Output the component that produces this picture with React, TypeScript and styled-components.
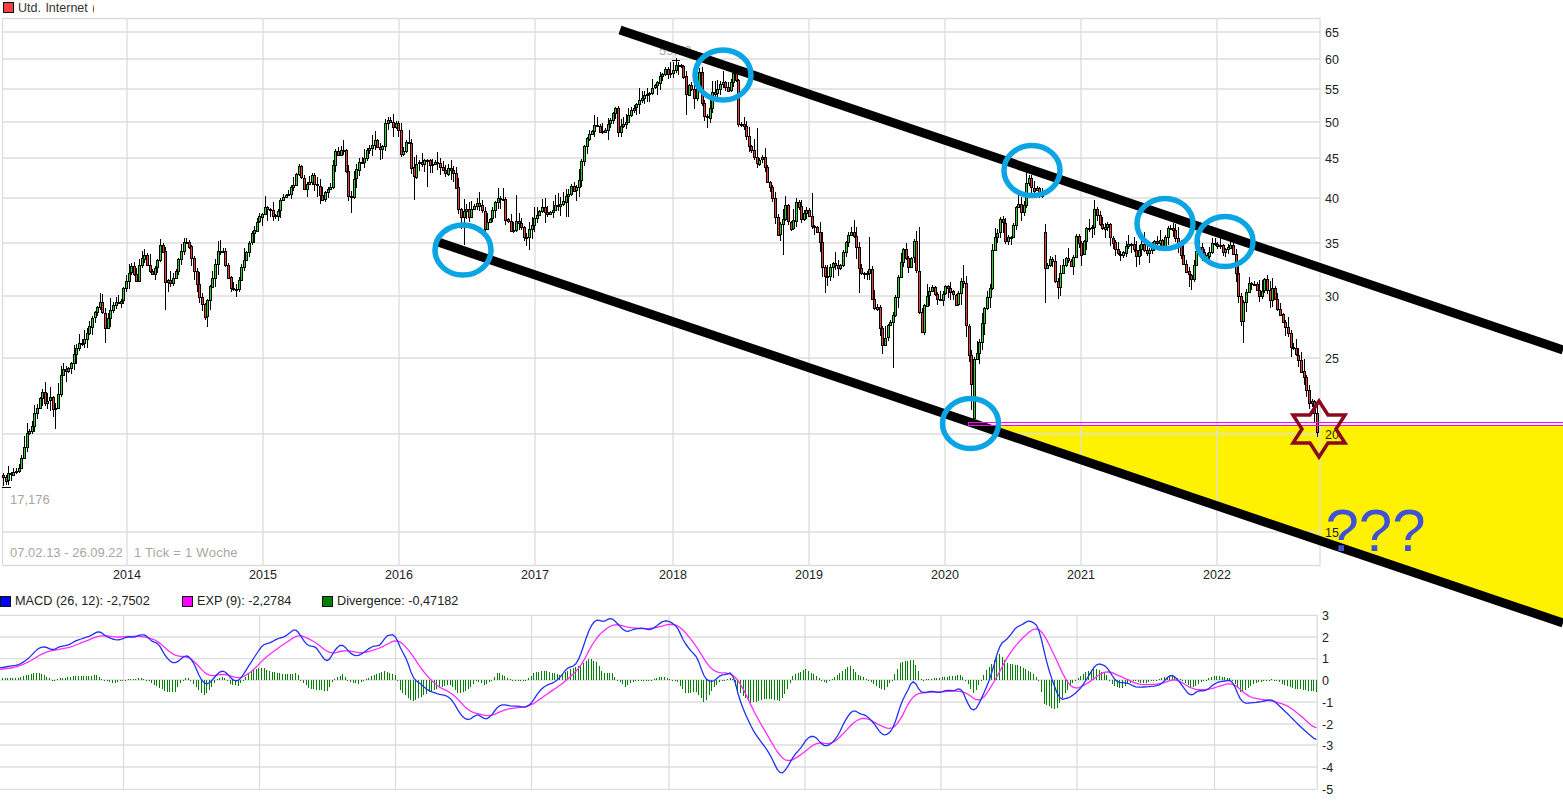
import * as React from "react";
import styled, { createGlobalStyle } from "styled-components";

type Pt = [number, number];

// traced by hand from the chart, all in page pixels
const PRICE: Pt[] = [
  [3, 480], [10, 475], [18, 470], [23, 457], [27, 433], [33, 423], [37, 407], [42, 390], [47, 405], [50, 393],
  [54, 415], [58, 397], [62, 367], [67, 374], [74, 357], [80, 342], [87, 335], [93, 318], [100, 298], [106, 328],
  [110, 308], [121, 300], [126, 282], [132, 268], [137, 283], [140, 260], [145, 255], [152, 277], [158, 262],
  [162, 238], [165, 280], [172, 287], [178, 263], [185, 240], [190, 247], [193, 267], [198, 290], [205, 315],
  [212, 280], [218, 253], [223, 252], [232, 293], [237, 285], [245, 257], [252, 232], [258, 223], [267, 205],
  [274, 220], [282, 198], [293, 187], [300, 167], [304, 190], [312, 175], [322, 197], [330, 190], [335, 153],
  [345, 150], [348, 193], [352, 200], [355, 170], [362, 160], [370, 148], [375, 138], [382, 155], [385, 122],
  [390, 115], [392, 130], [397, 118], [402, 163], [405, 142], [410, 140], [413, 182], [417, 165], [425, 160],
  [432, 167], [437, 160], [445, 173], [453, 167], [457, 190], [458, 207], [462, 218], [466, 208], [470, 215],
  [475, 202], [482, 205], [485, 232], [490, 217], [495, 203], [503, 197], [505, 217], [513, 232], [518, 218],
  [525, 240], [530, 230], [537, 213], [543, 208], [552, 213], [557, 205], [565, 200], [570, 188], [578, 188],
  [583, 153], [587, 137], [597, 125], [602, 133], [610, 120], [617, 107], [618, 132], [627, 120], [632, 108],
  [640, 102], [647, 93], [655, 85], [663, 73], [672, 70], [675, 65], [680, 68], [683, 65], [686, 100], [690, 80],
  [695, 98], [700, 73], [703, 115], [709, 117], [712, 93], [717, 93], [722, 80], [727, 90], [730, 88], [733, 73],
  [737, 83], [738, 128], [743, 123], [747, 138], [752, 150], [757, 165], [763, 155], [767, 178], [772, 190],
  [775, 215], [778, 232], [783, 223], [786, 203], [790, 235], [795, 213], [798, 190], [800, 220], [808, 210],
  [812, 223], [818, 232], [822, 252], [823, 277], [828, 273], [835, 262], [840, 268], [845, 242], [852, 230],
  [857, 247], [860, 273], [870, 270], [873, 305], [878, 308], [883, 347], [887, 327], [893, 315], [900, 268],
  [903, 247], [910, 270], [915, 238], [919, 307], [922, 333], [925, 300], [933, 287], [940, 303], [947, 283],
  [957, 305], [963, 272], [967, 330], [972, 383], [974.4, 360], [980, 340], [985, 305], [990, 290],
  [993, 243], [998, 230], [1002, 218], [1006, 243], [1013, 232], [1017, 198], [1023, 213], [1028, 175], [1033, 193],
  [1037, 190], [1043, 197], [1044.5, 267], [1049, 262], [1053, 260], [1057, 293], [1062, 267], [1068, 258], [1073, 266],
  [1076, 235], [1083, 257], [1085, 230], [1092, 227], [1094, 205], [1098, 217], [1102, 230], [1108, 225], [1112, 243],
  [1117, 253], [1122, 253], [1128, 240], [1137, 258], [1140, 245], [1147, 252], [1157, 240], [1163, 245], [1168, 225],
  [1173, 227], [1177, 242], [1181, 253], [1185, 268], [1192, 278], [1196, 255], [1200, 245], [1205, 263], [1212, 243],
  [1218, 243], [1225, 253], [1232, 242], [1238, 285], [1241, 322], [1243, 307], [1246, 293], [1248, 283], [1253, 283],
  [1260, 295], [1265, 282], [1270, 298], [1273, 285], [1278, 310], [1282, 317], [1287, 328], [1291, 347], [1295, 348],
  [1298, 357], [1304, 376], [1307, 393], [1310, 402], [1313, 400], [1317, 432],
];

// wicks that stick out far enough to be seen one by one
const LONG_WICKS: Pt[] = [
  [56, 429], [105, 343], [165, 310], [352, 213], [414, 200], [428, 187], [464, 245], [516, 195], [529, 250],
  [567, 217], [686, 115], [707, 128], [756, 128], [783, 255], [812, 193], [824, 293], [858, 293], [869, 237],
  [892, 368], [919, 227], [963, 265], [972, 410], [1044, 303], [1243, 343],
];

// weeks that opened far from the last close
const GAPS: Pt[] = [[974, 418], [1045, 232]];

// MACD traces, measured off a zoom that was squeezed: x / 2.376, y / 3
const macdA: Pt[] = [
  [0, 174], [20, 169], [45, 165], [65, 148], [80, 130], [90, 114], [108, 109], [125, 122], [140, 110], [162, 106],
  [180, 92], [200, 84], [218, 76], [235, 61], [250, 78], [275, 91], [290, 88], [305, 78], [315, 84], [335, 73],
  [350, 76], [362, 100], [375, 94], [390, 135], [412, 163], [428, 150], [442, 133], [458, 150], [475, 205], [490, 227],
  [505, 210], [520, 185], [535, 182], [550, 208], [565, 217], [580, 190], [600, 150], [625, 102], [640, 100], [660, 85],
  [675, 82], [703, 54], [720, 90], [735, 112], [748, 105], [768, 145], [780, 160], [795, 118], [815, 100], [825, 122],
  [845, 140], [860, 132], [880, 112], [892, 106], [905, 110], [915, 77], [940, 73], [952, 120], [965, 140], [980, 205],
  [1000, 222], [1015, 240], [1040, 252], [1065, 258], [1080, 280], [1092, 312], [1112, 333], [1130, 315], [1140, 312],
  [1150, 330], [1165, 322], [1185, 285], [1205, 284], [1215, 290], [1232, 287], [1245, 294], [1260, 285], [1280, 245],
  [1297, 225], [1310, 222], [1330, 205], [1345, 175], [1370, 165], [1385, 115], [1400, 55], [1418, 25], [1432, 38],
  [1452, 21], [1470, 45], [1487, 67], [1510, 56], [1530, 54], [1545, 62], [1568, 40],
];
const macdB: Pt[] = [
  [0, 37], [12, 31], [25, 35], [45, 55], [55, 95], [70, 113], [75, 132], [87, 133], [105, 205], [125, 218], [145, 193],
  [162, 195], [172, 178], [180, 230], [195, 290], [220, 360], [240, 395], [260, 430], [285, 495], [300, 480], [318, 435],
  [335, 415], [350, 382], [368, 376], [385, 405], [398, 410], [420, 385], [440, 330], [460, 297], [475, 313], [490, 315],
  [515, 350], [525, 375], [540, 375], [555, 355], [575, 270], [590, 240], [603, 200], [615, 245], [630, 248], [645, 243],
  [665, 249], [680, 240], [705, 243], [715, 228], [730, 280], [745, 307], [755, 290], [785, 205], [807, 103], [825, 88],
  [850, 45], [860, 50], [870, 31], [885, 35], [900, 50], [915, 140], [930, 205], [950, 270], [975, 262], [1000, 235],
  [1037, 160], [1060, 167], [1085, 218], [1110, 218], [1130, 232], [1165, 230], [1190, 225], [1212, 193], [1225, 200],
  [1260, 260], [1280, 240], [1295, 245], [1320, 218], [1345, 212], [1360, 210], [1375, 260], [1385, 280], [1420, 277],
  [1455, 268], [1490, 310], [1530, 360], [1560, 392],
];
const expA: Pt[] = [
  [0, 179], [40, 171], [70, 155], [105, 127], [130, 120], [165, 113], [200, 95], [240, 75], [280, 82], [320, 78],
  [345, 80], [375, 92], [395, 118], [420, 141], [445, 137], [465, 158], [490, 195], [505, 200], [530, 190], [570, 207],
  [600, 183], [630, 143], [660, 115], [710, 72], [750, 97], [785, 133], [820, 120], [860, 130], [900, 116], [945, 86],
  [975, 125], [1005, 185], [1040, 230], [1075, 250], [1115, 305], [1165, 320], [1200, 298], [1260, 288], [1300, 252],
  [1340, 218], [1380, 170], [1410, 95], [1430, 65], [1460, 40], [1490, 52], [1530, 57], [1568, 52],
];
const expB: Pt[] = [
  [0, 48], [25, 42], [45, 45], [85, 105], [110, 160], [130, 187], [170, 190], [190, 215], [225, 310], [255, 375],
  [285, 440], [305, 458], [340, 430], [370, 397], [410, 403], [440, 365], [465, 330], [490, 322], [520, 345], [548, 360],
  [565, 345], [600, 255], [625, 248], [700, 243], [725, 245], [760, 280], [790, 225], [830, 130], [860, 85], [890, 52],
  [905, 55], [935, 130], [965, 215], [985, 240], [1010, 225], [1060, 180], [1090, 197], [1140, 225], [1190, 222],
  [1225, 205], [1265, 238], [1300, 240], [1360, 217], [1400, 262], [1450, 272], [1490, 285], [1530, 325], [1560, 362],
];
const divA: Pt[] = [
  [0, 204], [40, 204], [60, 196], [90, 187], [110, 200], [125, 211], [140, 205], [175, 199], [230, 196], [245, 210],
  [270, 220], [300, 208], [335, 204], [350, 212], [370, 228], [395, 245], [415, 245], [430, 215], [443, 202], [455, 215],
  [482, 257], [500, 235], [515, 205], [530, 200], [545, 222], [565, 228], [580, 205], [600, 178], [625, 172], [640, 185],
  [680, 193], [705, 190], [715, 212], [735, 236], [760, 240], [775, 245], [790, 212], [812, 192], [830, 215], [850, 222],
  [880, 200], [915, 183], [940, 195], [950, 240], [978, 275], [1000, 260], [1020, 245], [1060, 225], [1070, 225],
  [1090, 252], [1115, 235], [1130, 212], [1150, 225], [1170, 208], [1182, 186], [1210, 208], [1245, 215], [1270, 187],
  [1295, 183], [1330, 195], [1350, 180], [1380, 165], [1400, 145], [1420, 160], [1430, 188], [1455, 190], [1465, 210],
  [1485, 230], [1510, 210], [1545, 212], [1568, 198],
];
const divB: Pt[] = [
  [0, 198], [20, 207], [40, 215], [60, 250], [85, 245], [105, 278], [125, 235], [145, 212], [170, 202], [180, 238],
  [215, 280], [250, 265], [285, 273], [300, 245], [315, 195], [345, 178], [370, 197], [395, 220], [415, 200], [450, 165],
  [470, 195], [495, 210], [530, 242], [550, 212], [570, 157], [600, 148], [612, 180], [620, 210], [715, 195], [725, 210],
  [745, 252], [760, 215], [775, 180], [805, 132], [825, 160], [850, 165], [885, 190], [900, 212], [910, 280], [940, 300],
  [960, 250], [985, 212], [1010, 187], [1035, 175], [1060, 195], [1075, 225], [1095, 237], [1125, 210], [1145, 220],
  [1175, 212], [1215, 195], [1235, 208], [1262, 235], [1290, 212], [1320, 197], [1355, 205], [1380, 250], [1410, 220],
  [1450, 208], [1460, 210], [1500, 235], [1560, 245],
];

const WEEK = 2.617;
const trace = (a: Pt[], b: Pt[]): Pt[] =>
  [...a.map(([x, y]): Pt => [x / 2.376, 610 + y / 3]), ...b.map(([x, y]): Pt => [660 + x / 2.376, 610 + y / 3])];

const interp = (pts: Pt[], x: number) => {
  if (x <= pts[0][0]) return pts[0][1];
  for (let i = 1; i < pts.length; i++) {
    if (x <= pts[i][0]) {
      const [x0, y0] = pts[i - 1];
      const [x1, y1] = pts[i];
      return y0 + ((y1 - y0) * (x - x0)) / (x1 - x0 || 1);
    }
  }
  return pts[pts.length - 1][1];
};

const rnd = (n: number) => {
  const s = Math.sin(n * 12.9898) * 43758.5453;
  return s - Math.floor(s);
};

// one point per week, averaged over the weeks around it
const smooth = (pts: Pt[], reach: number): Pt[] => {
  const raw: Pt[] = [];
  for (let x = 0; x <= pts[pts.length - 1][0]; x += WEEK) raw.push([x, interp(pts, x)]);
  return raw.map(([x], i) => {
    const part = raw.slice(Math.max(0, i - reach), i + reach + 1);
    return [x, part.reduce((sum, p) => sum + p[1], 0) / part.length];
  });
};

const toPoints = (pts: Pt[]) => pts.map(([x, y]) => `${x.toFixed(1)},${y.toFixed(1)}`).join(" ");

const candles = Array.from({ length: 503 }, (_, i) => i).reduce<
  { x: number; open: number; close: number; high: number; low: number }[]
>((list, i) => {
  const x = Math.round(3 + WEEK * i);
  const close = interp(PRICE, 3.5 + WEEK * i) + (rnd(i) - 0.5) * 6;
  const gap = GAPS.find(([gx]) => gx === x);
  const open = gap ? gap[1] : list.length ? list[list.length - 1].close : close - 2;
  const top = Math.min(open, close);
  const bottom = Math.max(open, close);
  let high = top - 1 - rnd(i + 900) ** 2 * 11;
  let low = bottom + 1 + rnd(i + 1800) ** 2 * 11;
  LONG_WICKS.forEach(([wx, wy]) => {
    if (Math.abs(wx - x) <= 1.3) {
      if (wy < top) high = wy;
      else low = wy;
    }
  });
  list.push({ x, open, close, high, low });
  return list;
}, []);

const macdLine = smooth(trace(macdA, macdB), 1);
const expLine = smooth(trace(expA, expB), 2);
const divLine = trace(divA, divB);
const bars = Array.from({ length: 503 }, (_, i) => 2 + WEEK * i).map((x) => ({
  x: Math.round(x),
  y: interp(divLine, x),
}));

const YEARS = ["2014", "2015", "2016", "2017", "2018", "2019", "2020", "2021", "2022"];
const PRICE_V = [127, 263, 399, 535, 673, 809, 945, 1081, 1217];
const MACD_V = [123.5, 259.5, 395.5, 531.5, 669, 805, 941, 1077, 1214.5];
const PRICE_H: [number, string][] = [
  [32, "65"], [59, "60"], [89, "55"], [122, "50"], [158, "45"], [198, "40"], [243, "35"], [296, "30"], [358, "25"],
  [434, "20"], [532, "15"],
];
const MACD_H: [number, string][] = [
  [615.3, "3"], [637, "2"], [658.7, "1"], [680, "0"], [702, "-1"], [724, "-2"], [745, "-3"], [767, "-4"], [789.3, "-5"],
];
const RINGS: Pt[] = [[723, 75], [1032, 170.5], [1165, 223.5], [1225, 241.5], [970.5, 423.5], [463, 250]];
const STAR =
  "1319,401 1328,415 1345,415 1336,429 1345,443 1328,443 1319,457 1310,443 1293,443 1302,429 1293,415 1310,415";

const GlobalStyle = createGlobalStyle`
  html, body {
    margin: 0;
    padding: 0;
    background: #fff;
  }
  body {
    font-family: "Liberation Sans", Arial, sans-serif;
  }
`;

const Page = styled.div`
  position: relative;
  width: 1563px;
  height: 804px;
  overflow: hidden;
  background: #fff;
`;

const TitleRow = styled.div`
  display: flex;
  align-items: center;
  gap: 4px;
  height: 18px;
  padding: 0 0 3px 3px;
  box-sizing: border-box;
`;

const Swatch = styled.span<{ $color: string }>`
  flex: none;
  width: 11px;
  height: 11px;
  box-sizing: border-box;
  border: 1px solid #111;
  background: ${(p) => p.$color};
`;

const Title = styled.span`
  width: 76px;
  overflow: hidden;
  white-space: pre;
  font-size: 12.5px;
  word-spacing: 1px;
  color: #333;
`;

const LegendRow = styled.div`
  display: grid;
  grid-template-columns: 182px 140px auto;
  align-items: center;
  height: 22px;
`;

const LegendItem = styled.div`
  display: flex;
  align-items: center;
  gap: 4px;
  font-size: 12.7px;
  color: #222;
  white-space: pre;
`;

const PriceSvg = styled.svg`
  display: block;
  width: 1563px;
  height: 572px;
  overflow: visible;
`;

const MacdSvg = styled.svg`
  display: block;
  width: 1563px;
  height: 192px;
  overflow: visible;
`;

const Overlay = styled.svg`
  position: absolute;
  inset: 0;
  width: 1563px;
  height: 804px;
  pointer-events: none;
`;

const GridLine = styled.line`
  stroke: #dcdcdc;
  stroke-width: 1.3;
`;

const Frame = styled.polyline`
  fill: none;
  stroke: #dcdcdc;
  stroke-width: 1.3;
`;

const Fill = styled.polygon`
  fill: #fff200;
`;

const Wick = styled.line`
  stroke: #000;
  stroke-width: 1;
  shape-rendering: crispEdges;
`;

const Body = styled.rect<{ $up: boolean }>`
  fill: ${(p) => (p.$up ? "#20dc20" : "#f23c3c")};
  stroke: #000;
  stroke-width: 1;
  shape-rendering: crispEdges;
`;

const Bar = styled.rect`
  fill: #008000;
  shape-rendering: crispEdges;
`;

const Curve = styled.polyline<{ $color: string }>`
  fill: none;
  stroke: ${(p) => p.$color};
  stroke-width: 1.3;
  stroke-linejoin: round;
`;

const AxisText = styled.text`
  font-family: "Liberation Sans", Arial, sans-serif;
  font-size: 12.5px;
  fill: #222;
`;

const NoteText = styled.text`
  font-family: "Liberation Sans", Arial, sans-serif;
  font-size: 13px;
  fill: #a9a6a2;
`;

const TickNote = styled(NoteText)`
  letter-spacing: 0.25px;
`;

const Trend = styled.line`
  stroke: #000;
  stroke-width: 9;
`;

const Level = styled.polyline`
  fill: none;
  stroke: #ff00ff;
  stroke-width: 1;
  shape-rendering: crispEdges;
`;

const Ring = styled.ellipse`
  fill: none;
  stroke: #0ba5e3;
  stroke-width: 5.5;
`;

const Star = styled.polygon`
  fill: none;
  stroke: #8a0a1e;
  stroke-width: 3.5;
`;

const Question = styled.text`
  font-family: "Liberation Sans", Arial, sans-serif;
  font-size: 60px;
  fill: #3f51d4;
`;

const PriceChart = () => (
  <PriceSvg viewBox="0 18 1563 572">
    <Fill points="978,426 1563,426 1563,623" />
    {PRICE_V.map((x) => (
      <GridLine key={x} x1={x} x2={x} y1={18} y2={565.5} />
    ))}
    {PRICE_H.map(([y]) => (
      <GridLine key={y} x1={2.5} x2={1320} y1={y} y2={y} />
    ))}
    <Frame points="2.5,565.5 2.5,18.5 1320,18.5 1320,565.5 2.5,565.5" />
    {candles.map((c) => (
      <g key={c.x}>
        <Wick x1={c.x + 0.5} x2={c.x + 0.5} y1={c.high} y2={c.low} />
        <Body
          $up={c.close <= c.open}
          x={c.x - 0.5}
          y={Math.round(Math.min(c.open, c.close)) + 0.5}
          width={2}
          height={Math.max(1, Math.round(Math.abs(c.open - c.close)))}
        />
      </g>
    ))}
    <Wick x1={672} x2={680} y1={60.5} y2={60.5} />
    <Wick x1={2} x2={11} y1={487.5} y2={487.5} />
    {PRICE_H.map(([y, label]) => (
      <AxisText key={label} x={1325} y={y + 4.5}>
        {label}
      </AxisText>
    ))}
    {YEARS.map((year, i) => (
      <AxisText key={year} x={PRICE_V[i]} y={579} textAnchor="middle">
        {year}
      </AxisText>
    ))}
    <NoteText x={659} y={55}>59,79</NoteText>
    <NoteText x={10} y={504}>17,176</NoteText>
    <NoteText x={10} y={557}>07.02.13 - 26.09.22</NoteText>
    <TickNote x={134} y={557}>1 Tick = 1 Woche</TickNote>
  </PriceSvg>
);

const MacdChart = () => (
  <MacdSvg viewBox="0 612 1563 192">
    {MACD_V.map((x) => (
      <GridLine key={x} x1={x} x2={x} y1={615} y2={789.5} />
    ))}
    {MACD_H.map(([y]) => (
      <GridLine key={y} x1={0} x2={1317} y1={y} y2={y} />
    ))}
    <GridLine x1={1317.3} x2={1317.3} y1={615} y2={789.5} />
    {bars.map((b) => (
      <Bar key={b.x} x={b.x} y={Math.min(b.y, 680)} width={1} height={Math.max(1, Math.abs(b.y - 680))} />
    ))}
    <Curve $color="#ff2cff" points={toPoints(expLine)} />
    <Curve $color="#2230f5" points={toPoints(macdLine)} />
    {MACD_H.map(([y, label]) => (
      <AxisText key={label} x={1322} y={y + 4.5}>
        {label}
      </AxisText>
    ))}
  </MacdSvg>
);

export default function App() {
  return (
    <Page>
      <GlobalStyle />
      <TitleRow>
        <Swatch $color="#f44040" />
        <Title>Utd. Internet (</Title>
      </TitleRow>
      <PriceChart />
      <LegendRow>
        <LegendItem>
          <Swatch $color="#0000ff" />
          MACD (26, 12): -2,7502
        </LegendItem>
        <LegendItem>
          <Swatch $color="#ff00ff" />
          EXP (9): -2,2784
        </LegendItem>
        <LegendItem>
          <Swatch $color="#008000" />
          Divergence: -0,47182
        </LegendItem>
      </LegendRow>
      <MacdChart />
      <Overlay viewBox="0 0 1563 804">
        <Trend x1={620} y1={30} x2={1563} y2={350} />
        <Trend x1={438} y1={242} x2={1563} y2={623} />
        <Level points="1563,422.5 968.5,422.5 968.5,425.5 1563,425.5" />
        {RINGS.map(([cx, cy]) => (
          <Ring key={cx} cx={cx} cy={cy} rx={28} ry={25} />
        ))}
        <Star points={STAR} />
        <Question x={1325.5} y={551}>???</Question>
      </Overlay>
    </Page>
  );
}
